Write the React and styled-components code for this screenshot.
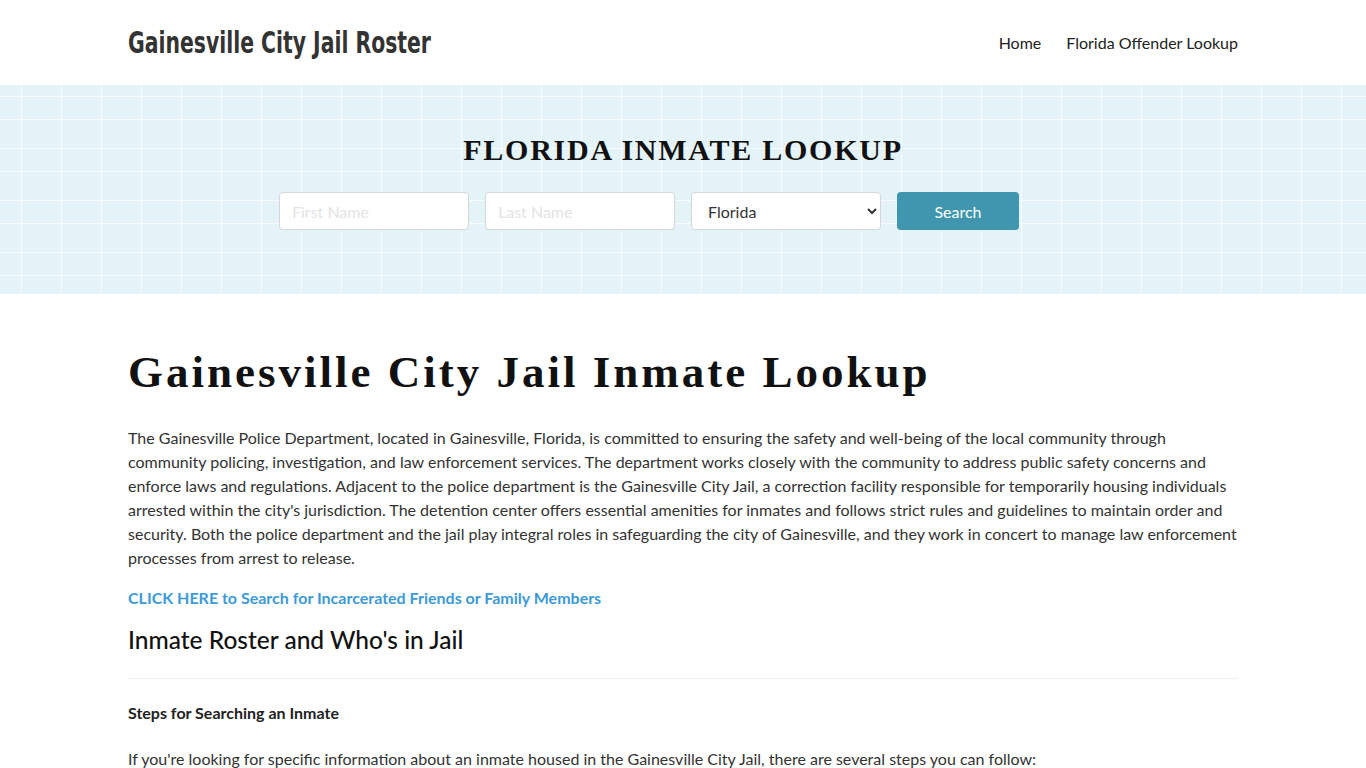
import React from "react";
import styled, { createGlobalStyle } from "styled-components";

const Global = createGlobalStyle`
  html, body { margin: 0; padding: 0; background: #fff; }
  body { font-family: Lato, "Open Sans", sans-serif; color: #333; font-size: 16px; line-height: 24px; }
  * { box-sizing: border-box; }
`;

const Container = styled.div`
  width: 1110px;
  margin: 0 auto;
`;

const Header = styled.header`
  height: 85px;
  background: #fff;
`;

const HeaderInner = styled(Container)`
  height: 100%;
  display: flex;
  align-items: center;
  justify-content: space-between;
`;

const Brand = styled.a`
  display: inline-block;
  font-family: "DejaVu Sans Condensed", "DejaVu Sans", sans-serif;
  font-stretch: condensed;
  font-weight: 700;
  font-size: 30px;
  color: #333;
  text-decoration: none;
  transform: scaleX(0.755);
  transform-origin: left center;
  white-space: nowrap;
`;

const Nav = styled.nav`
  display: flex;
  gap: 25px;
`;

const NavLink = styled.a`
  font-size: 16px;
  color: #222;
  text-decoration: none;
`;

const Hero = styled.section`
  height: 209px;
  background-color: #e3f3f8;
  background-image:
    linear-gradient(90deg, transparent 21px, rgba(255,255,255,0.7) 21px, rgba(255,255,255,0.7) 22.5px, transparent 22.5px),
    linear-gradient(180deg, transparent 11px, rgba(255,255,255,0.7) 11px, rgba(255,255,255,0.7) 12.5px, transparent 12.5px, transparent 34px, rgba(255,255,255,0.7) 34px, rgba(255,255,255,0.7) 35.5px, transparent 35.5px);
  background-size: 40px 100%, 100% 52px;
  padding-top: 47px;
`;

const HeroTitle = styled.h2`
  margin: 0;
  text-align: center;
  font-family: "Liberation Serif", serif;
  font-weight: 700;
  font-size: 30px;
  line-height: 36px;
  letter-spacing: 1.75px;
  color: #111;
`;

const Form = styled.form`
  display: flex;
  gap: 16px;
  margin-top: 24px;
  padding-left: 151px;
`;

const Field = styled.input`
  width: 190px;
  height: 38px;
  border: 1px solid #d4d8da;
  border-radius: 4px;
  background: #fff;
  padding: 0 12px;
  font-family: Lato, sans-serif;
  font-size: 16px;
  color: #333;
  &::placeholder { color: #e4e4e4; }
`;

const Select = styled.select`
  width: 190px;
  height: 38px;
  border: 1px solid #d4d8da;
  border-radius: 4px;
  background: #fff;
  padding: 0 12px;
  font-family: Lato, sans-serif;
  font-size: 16px;
  color: #333;
`;

const Button = styled.button`
  width: 122px;
  height: 38px;
  border: none;
  border-radius: 4px;
  background: #3f96ae;
  color: #fff;
  font-family: Lato, sans-serif;
  font-size: 16px;
`;

const Main = styled(Container)`
  padding-top: 50px;
`;

const H1 = styled.h1`
  margin: 0 0 26px;
  font-family: "Liberation Serif", serif;
  font-weight: 700;
  font-size: 45px;
  line-height: 56px;
  letter-spacing: 3px;
  color: #111;
`;

const P = styled.p`
  margin: 0 0 ${(p) => (p.$spaced ? "16px" : "0")};
  font-size: 16px;
  line-height: 24px;
  color: #333;
`;

const LinkP = styled.a`
  display: block;
  font-weight: 700;
  font-size: 16px;
  color: #3c9ad8;
  text-decoration: none;
  margin-bottom: 15px;
`;

const H2 = styled.h2`
  margin: 0;
  font-size: 24.5px;
  font-weight: 500;
  line-height: 30px;
  color: #111;
`;

const Rule = styled.hr`
  border: none;
  border-top: 1px solid #eee;
  margin: 23px 0 22px;
`;

const Strong = styled.p`
  margin: 0 0 22px;
  font-weight: 700;
  color: #222;
`;

export default function App() {
  return (
    <>
      <Global />
      <Header>
        <HeaderInner>
          <Brand href="#">Gainesville City Jail Roster</Brand>
          <Nav>
            <NavLink href="#">Home</NavLink>
            <NavLink href="#">Florida Offender Lookup</NavLink>
          </Nav>
        </HeaderInner>
      </Header>
      <Hero>
        <HeroTitle>FLORIDA INMATE LOOKUP</HeroTitle>
        <Container>
          <Form onSubmit={(e) => e.preventDefault()}>
            <Field placeholder="First Name" />
            <Field placeholder="Last Name" />
            <Select defaultValue="Florida">
              <option>Florida</option>
            </Select>
            <Button type="submit">Search</Button>
          </Form>
        </Container>
      </Hero>
      <Main>
        <H1>Gainesville City Jail Inmate Lookup</H1>
        <P $spaced>
          The Gainesville Police Department, located in Gainesville, Florida, is committed to ensuring the safety and well-being of the local community through community policing, investigation, and law enforcement services. The department works closely with the community to address public safety concerns and enforce laws and regulations. Adjacent to the police department is the Gainesville City Jail, a correction facility responsible for temporarily housing individuals arrested within the city's jurisdiction. The detention center offers essential amenities for inmates and follows strict rules and guidelines to maintain order and security. Both the police department and the jail play integral roles in safeguarding the city of Gainesville, and they work in concert to manage law enforcement processes from arrest to release.
        </P>
        <LinkP href="#">CLICK HERE to Search for Incarcerated Friends or Family Members</LinkP>
        <H2>Inmate Roster and Who's in Jail</H2>
        <Rule />
        <Strong>Steps for Searching an Inmate</Strong>
        <P>If you're looking for specific information about an inmate housed in the Gainesville City Jail, there are several steps you can follow:</P>
      </Main>
    </>
  );
}
